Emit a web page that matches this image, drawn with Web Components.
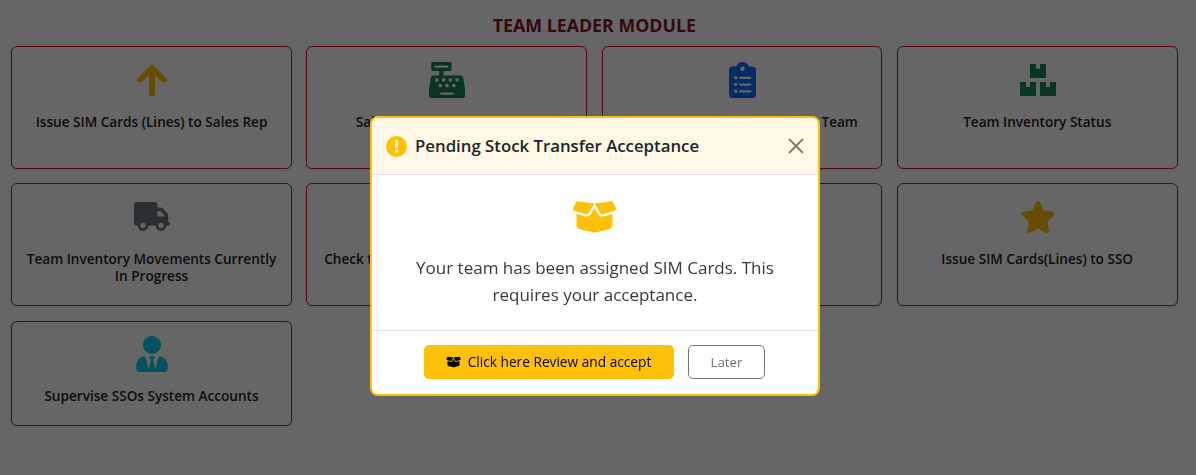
<!DOCTYPE html>
<html lang="en">
<head>
<meta charset="utf-8">
<title>Team Leader Module</title>
<style>
  html, body { margin: 0; height: 100%; background: #fff; }
  body { font-family: "Open Sans", "Noto Sans", sans-serif; color: #212529; }
</style>
</head>
<body>
<template id="module-page-tpl">
  <style>
    :host { display: block; padding: 15px 18.4px 0 11.1px; }
    h1 {
      margin: 0 0 10px;
      text-align: center;
      font: 700 17.8px/21px "Open Sans", sans-serif;
      color: #861b26;
    }
    .grid { display: grid; grid-template-columns: repeat(4, 1fr); gap: 14.5px 14.4px; }
  </style>
  <h1><slot name="title"></slot></h1>
  <div class="grid"><slot></slot></div>
</template>

<template id="module-card-tpl">
  <style>
    :host {
      display: flex;
      flex-direction: column;
      align-items: center;
      box-sizing: border-box;
      padding: 14.6px 12px 20.3px;
      border: 1px solid #c81e28;
      border-radius: 6px;
      background: #fff;
      box-shadow: 0 1px 3px rgba(0,0,0,.12);
    }
    .icon { height: 36px; display: flex; align-items: center; justify-content: center; margin: 0 0 15.3px 1px; }
    .label {
      font: 600 13.6px/17.3px "Open Sans", sans-serif;
      text-align: center;
      color: #212529;
    }
    ::slotted(svg) { display: block; }
  </style>
  <div class="icon"><slot name="icon"></slot></div>
  <div class="label"><slot></slot></div>
</template>

<template id="transfer-modal-tpl">
  <style>
    :host {
      position: fixed;
      inset: 0;
      display: flex;
      justify-content: center;
      align-items: flex-start;
      padding: 116px 6px 0 0;
      box-sizing: border-box;
      background: rgba(0,0,0,.6);
    }
    .dialog {
      box-sizing: border-box;
      width: 450px;
      height: 280px;
      display: flex;
      flex-direction: column;
      background: #fff;
      border: 2px solid #ffc107;
      border-radius: 8px;
      overflow: hidden;
    }
    header {
      height: 57px;
      box-sizing: border-box;
      display: flex;
      align-items: center;
      gap: 8px;
      padding: 0 14px;
      background: #fff8e6;
      border-bottom: 1px solid #dee2e6;
    }
    header svg.warn { width: 21px; height: 21px; fill: #ffc107; flex: none; }
    h2 { margin: 0; flex: 1; font: 600 16.8px/24px "Open Sans", sans-serif; color: #212529; }
    .close { width: 16px; height: 16px; stroke: #7f7d74; stroke-width: 1.9; fill: none; }
    .body {
      flex: 1;
      display: flex;
      flex-direction: column;
      align-items: center;
      padding: 24px 30px 0;
      text-align: center;
    }
    .body svg { width: 45px; height: 36px; fill: #ffc107; margin: 0 2px 19px 0; }
    .body p { margin: 0; font: 400 17px/27px "Open Sans", sans-serif; color: #343a40; }
    footer {
      height: 64px;
      box-sizing: border-box;
      display: flex;
      align-items: center;
      justify-content: center;
      gap: 14px;
      padding: 0 2px 2px 0;
      border-top: 1px solid #dee2e6;
    }
    .btn {
      box-sizing: border-box;
      height: 34px;
      display: flex;
      align-items: center;
      justify-content: center;
      border-radius: 5px;
      font: 400 13.7px/20px "Open Sans", sans-serif;
    }
    .accept { width: 250px; background: #ffc107; color: #000; gap: 7px; }
    .accept svg { width: 15px; height: 12px; fill: #000; }
    .later { width: 77px; padding-left: 1px; border: 1px solid #6c757d; color: #6c757d; font-size: 13.4px; }
  </style>
  <div class="dialog">
    <header>
      <svg class="warn" viewBox="0 0 512 512"><path fill-rule="evenodd" d="M256 512A256 256 0 1 0 256 0a256 256 0 1 0 0 512zM256 92c21 0 38 17 38 38v132c0 21-17 38-38 38s-38-17-38-38V130c0-21 17-38 38-38zM214 372a42 42 0 1 1 84 0 42 42 0 1 1 -84 0z"/></svg>
      <h2><slot name="title"></slot></h2>
      <svg class="close" viewBox="0 0 16 16"><path d="M1 1l14 14M15 1L1 15"/></svg>
    </header>
    <div class="body">
      <svg viewBox="0 0 640 512"><path d="M58.9 42.1c3-6.1 9.6-9.6 16.3-8.7L320 64 564.8 33.4c6.7-.8 13.3 2.7 16.3 8.7l41.7 83.4c9 17.9-.6 39.6-19.8 45.1L439.6 217.3c-13.9 4-28.8-1.9-36.2-14.3L320 64 236.6 203c-7.4 12.4-22.3 18.3-36.2 14.3L37.1 170.6c-19.3-5.5-28.8-27.2-19.8-45.1L58.9 42.1zM321.1 128l54.9 91.4c14.9 24.8 44.6 36.6 72.5 28.6L576 211.6v167c0 22-15 41.2-36.4 46.6l-204.1 51c-10.2 2.6-20.9 2.6-31 0l-204.1-51C79 419.7 64 400.5 64 378.5v-167L191.6 248c27.8 8 57.6-3.8 72.5-28.6L318.9 128h2.2z"/></svg>
      <p><slot></slot></p>
    </div>
    <footer>
      <div class="btn accept">
        <svg viewBox="0 0 640 512"><path d="M58.9 42.1c3-6.1 9.6-9.6 16.3-8.7L320 64 564.8 33.4c6.7-.8 13.3 2.7 16.3 8.7l41.7 83.4c9 17.9-.6 39.6-19.8 45.1L439.6 217.3c-13.9 4-28.8-1.9-36.2-14.3L320 64 236.6 203c-7.4 12.4-22.3 18.3-36.2 14.3L37.1 170.6c-19.3-5.5-28.8-27.2-19.8-45.1L58.9 42.1zM321.1 128l54.9 91.4c14.9 24.8 44.6 36.6 72.5 28.6L576 211.6v167c0 22-15 41.2-36.4 46.6l-204.1 51c-10.2 2.6-20.9 2.6-31 0l-204.1-51C79 419.7 64 400.5 64 378.5v-167L191.6 248c27.8 8 57.6-3.8 72.5-28.6L318.9 128h2.2z"/></svg>
        <span><slot name="accept"></slot></span>
      </div>
      <div class="btn later"><slot name="later"></slot></div>
    </footer>
  </div>
</template>

<module-page>
  <span slot="title">TEAM LEADER MODULE</span>

  <module-card>
    <svg slot="icon" width="32" height="36" viewBox="0 0 32 36" fill="none" stroke="#ffc107" stroke-width="6" stroke-linecap="round" stroke-linejoin="round"><path d="M16 6.5V31.5M4 18L16 6L28 18"/></svg>
    Issue SIM Cards (Lines) to Sales Rep
  </module-card>

  <module-card>
    <svg slot="icon" width="36" height="36" viewBox="0 0 512 512" fill="#198754"><path d="M511.1 378.8l-26.7-160c-2.6-15.4-15.9-26.7-31.6-26.7H208v-64h96c8.8 0 16-7.2 16-16V16c0-8.8-7.2-16-16-16H48c-8.8 0-16 7.2-16 16v96c0 8.8 7.2 16 16 16h96v64H59.1c-15.6 0-29 11.3-31.6 26.7L.8 378.7c-.5 2.6-.8 5.3-.8 7.9V480c0 17.7 14.3 32 32 32h448c17.7 0 32-14.3 32-32v-93.3c0-2.6-.3-5.3-.9-7.9zM280 248c0-8.8 7.2-16 16-16h16c8.8 0 16 7.2 16 16v16c0 8.8-7.2 16-16 16h-16c-8.8 0-16-7.2-16-16v-16zm-32 64h16c8.8 0 16 7.2 16 16v16c0 8.8-7.2 16-16 16h-16c-8.8 0-16-7.2-16-16v-16c0-8.8 7.2-16 16-16zm-32-80c8.8 0 16 7.2 16 16v16c0 8.8-7.2 16-16 16h-16c-8.8 0-16-7.2-16-16v-16c0-8.8 7.2-16 16-16h16zM80 80V48h192v32H80zm40 200h-16c-8.8 0-16-7.2-16-16v-16c0-8.8 7.2-16 16-16h16c8.8 0 16 7.2 16 16v16c0 8.8-7.2 16-16 16zm16 64v-16c0-8.8 7.2-16 16-16h16c8.8 0 16 7.2 16 16v16c0 8.8-7.2 16-16 16h-16c-8.8 0-16-7.2-16-16zm216 112c0 4.4-3.6 8-8 8H168c-4.4 0-8-3.6-8-8v-16c0-4.4 3.6-8 8-8h176c4.4 0 8 3.6 8 8v16zm24-112c0 8.8-7.2 16-16 16h-16c-8.8 0-16-7.2-16-16v-16c0-8.8 7.2-16 16-16h16c8.8 0 16 7.2 16 16v16zm48-80c0 8.8-7.2 16-16 16h-16c-8.8 0-16-7.2-16-16v-16c0-8.8 7.2-16 16-16h16c8.8 0 16 7.2 16 16v16z"/></svg>
    Sales by My Team Members
  </module-card>

  <module-card>
    <svg slot="icon" width="27" height="36" viewBox="0 0 384 512" fill="#0d6efd"><path fill-rule="evenodd" d="M192 0c-41.8 0-77.4 26.7-90.5 64H48C21.5 64 0 85.5 0 112v352c0 26.5 21.5 48 48 48h288c26.5 0 48-21.5 48-48V112c0-26.5-21.5-48-48-48H282.5C269.4 26.7 233.8 0 192 0zm0 64a32 32 0 1 1 0 64 32 32 0 1 1 0-64zM96 200a24 24 0 1 1 0 48 24 24 0 1 1 0-48zm64 8h144c8.8 0 16 7.2 16 16s-7.2 16-16 16H160c-8.8 0-16-7.2-16-16s7.2-16 16-16zM96 296a24 24 0 1 1 0 48 24 24 0 1 1 0-48zm64 8h144c8.8 0 16 7.2 16 16s-7.2 16-16 16H160c-8.8 0-16-7.2-16-16s7.2-16 16-16zM96 392a24 24 0 1 1 0 48 24 24 0 1 1 0-48zm64 8h144c8.8 0 16 7.2 16 16s-7.2 16-16 16H160c-8.8 0-16-7.2-16-16s7.2-16 16-16z"/></svg>
    Sales Reports from the Entire Team<br>Members
  </module-card>

  <module-card>
    <svg slot="icon" width="36" height="32" viewBox="0 0 36 32" fill="#198754"><path d="M10 0H16V5.5L18 4.5L20 5.5V0H26V14H10Z"/><path d="M0 18H6V23.5L8 22.5L10 23.5V18H16V32H0Z"/><path d="M20 18H26V23.5L28 22.5L30 23.5V18H36V32H20Z"/></svg>
    Team Inventory Status
  </module-card>

  <module-card>
    <svg slot="icon" width="36" height="29" viewBox="0 0 640 512" fill="#6c757d"><path d="M48 0C21.5 0 0 21.5 0 48V368c0 26.5 21.5 48 48 48H64c0 53 43 96 96 96s96-43 96-96H384c0 53 43 96 96 96s96-43 96-96h32c17.7 0 32-14.3 32-32s-14.3-32-32-32V288 256 237.3c0-17-6.7-33.3-18.7-45.3L512 114.7c-12-12-28.3-18.7-45.3-18.7H416V48c0-26.5-21.5-48-48-48H48zM416 160h50.7L544 237.3V256H416V160zM112 416a48 48 0 1 1 96 0 48 48 0 1 1 -96 0zm368-48a48 48 0 1 1 0 96 48 48 0 1 1 0-96z"/></svg>
    Team Inventory Movements Currently In Progress
  </module-card>

  <module-card>Check the Status of Team's SIM Cards</module-card>
  <module-card></module-card>

  <module-card>
    <svg slot="icon" width="36" height="32" viewBox="0 0 576 512" fill="#ffc107"><path d="M316.9 18C311.6 7 300.4 0 288.1 0s-23.4 7-28.8 18L195 150.3 51.4 171.5c-12 1.8-22 10.2-25.7 21.7s-.7 24.2 7.9 32.7L137.8 329 113.2 474.7c-2 12 3 24.2 12.9 31.3s23 8 33.8 2.3l128.3-68.5 128.3 68.5c10.8 5.7 23.9 4.9 33.8-2.3s14.9-19.3 12.9-31.3L438.5 329 542.7 225.9c8.6-8.5 11.7-21.2 7.9-32.7s-13.7-19.9-25.7-21.7L381.2 150.3 316.9 18z"/></svg>
    Issue SIM Cards(Lines) to SSO
  </module-card>

  <module-card>
    <svg slot="icon" width="32" height="36" viewBox="0 0 448 512" fill="#0dcaf0"><path d="M224 256c70.7 0 128-57.3 128-128S294.7 0 224 0 96 57.3 96 128s57.3 128 128 128zm95.8 32.6L272 480l-32-136 32-56h-96l32 56-32 136-47.8-191.4C56.9 292 0 350.3 0 422.4V464c0 26.5 21.5 48 48 48h352c26.5 0 48-21.5 48-48v-41.6c0-72.1-56.9-130.4-128.2-133.8z"/></svg>
    Supervise SSOs System Accounts
  </module-card>
</module-page>

<transfer-modal>
  <span slot="title">Pending Stock Transfer Acceptance</span>
  Your team has been assigned SIM Cards. This requires your acceptance.
  <span slot="accept">Click here Review and accept</span>
  <span slot="later">Later</span>
</transfer-modal>

<script>
  function fromTemplate(id) {
    return class extends HTMLElement {
      connectedCallback() {
        if (this.shadowRoot) return;
        this.attachShadow({ mode: 'open' });
        this.shadowRoot.appendChild(document.getElementById(id).content.cloneNode(true));
      }
    };
  }
  customElements.define('module-page', fromTemplate('module-page-tpl'));
  customElements.define('module-card', fromTemplate('module-card-tpl'));
  customElements.define('transfer-modal', fromTemplate('transfer-modal-tpl'));
</script>
</body>
</html>
